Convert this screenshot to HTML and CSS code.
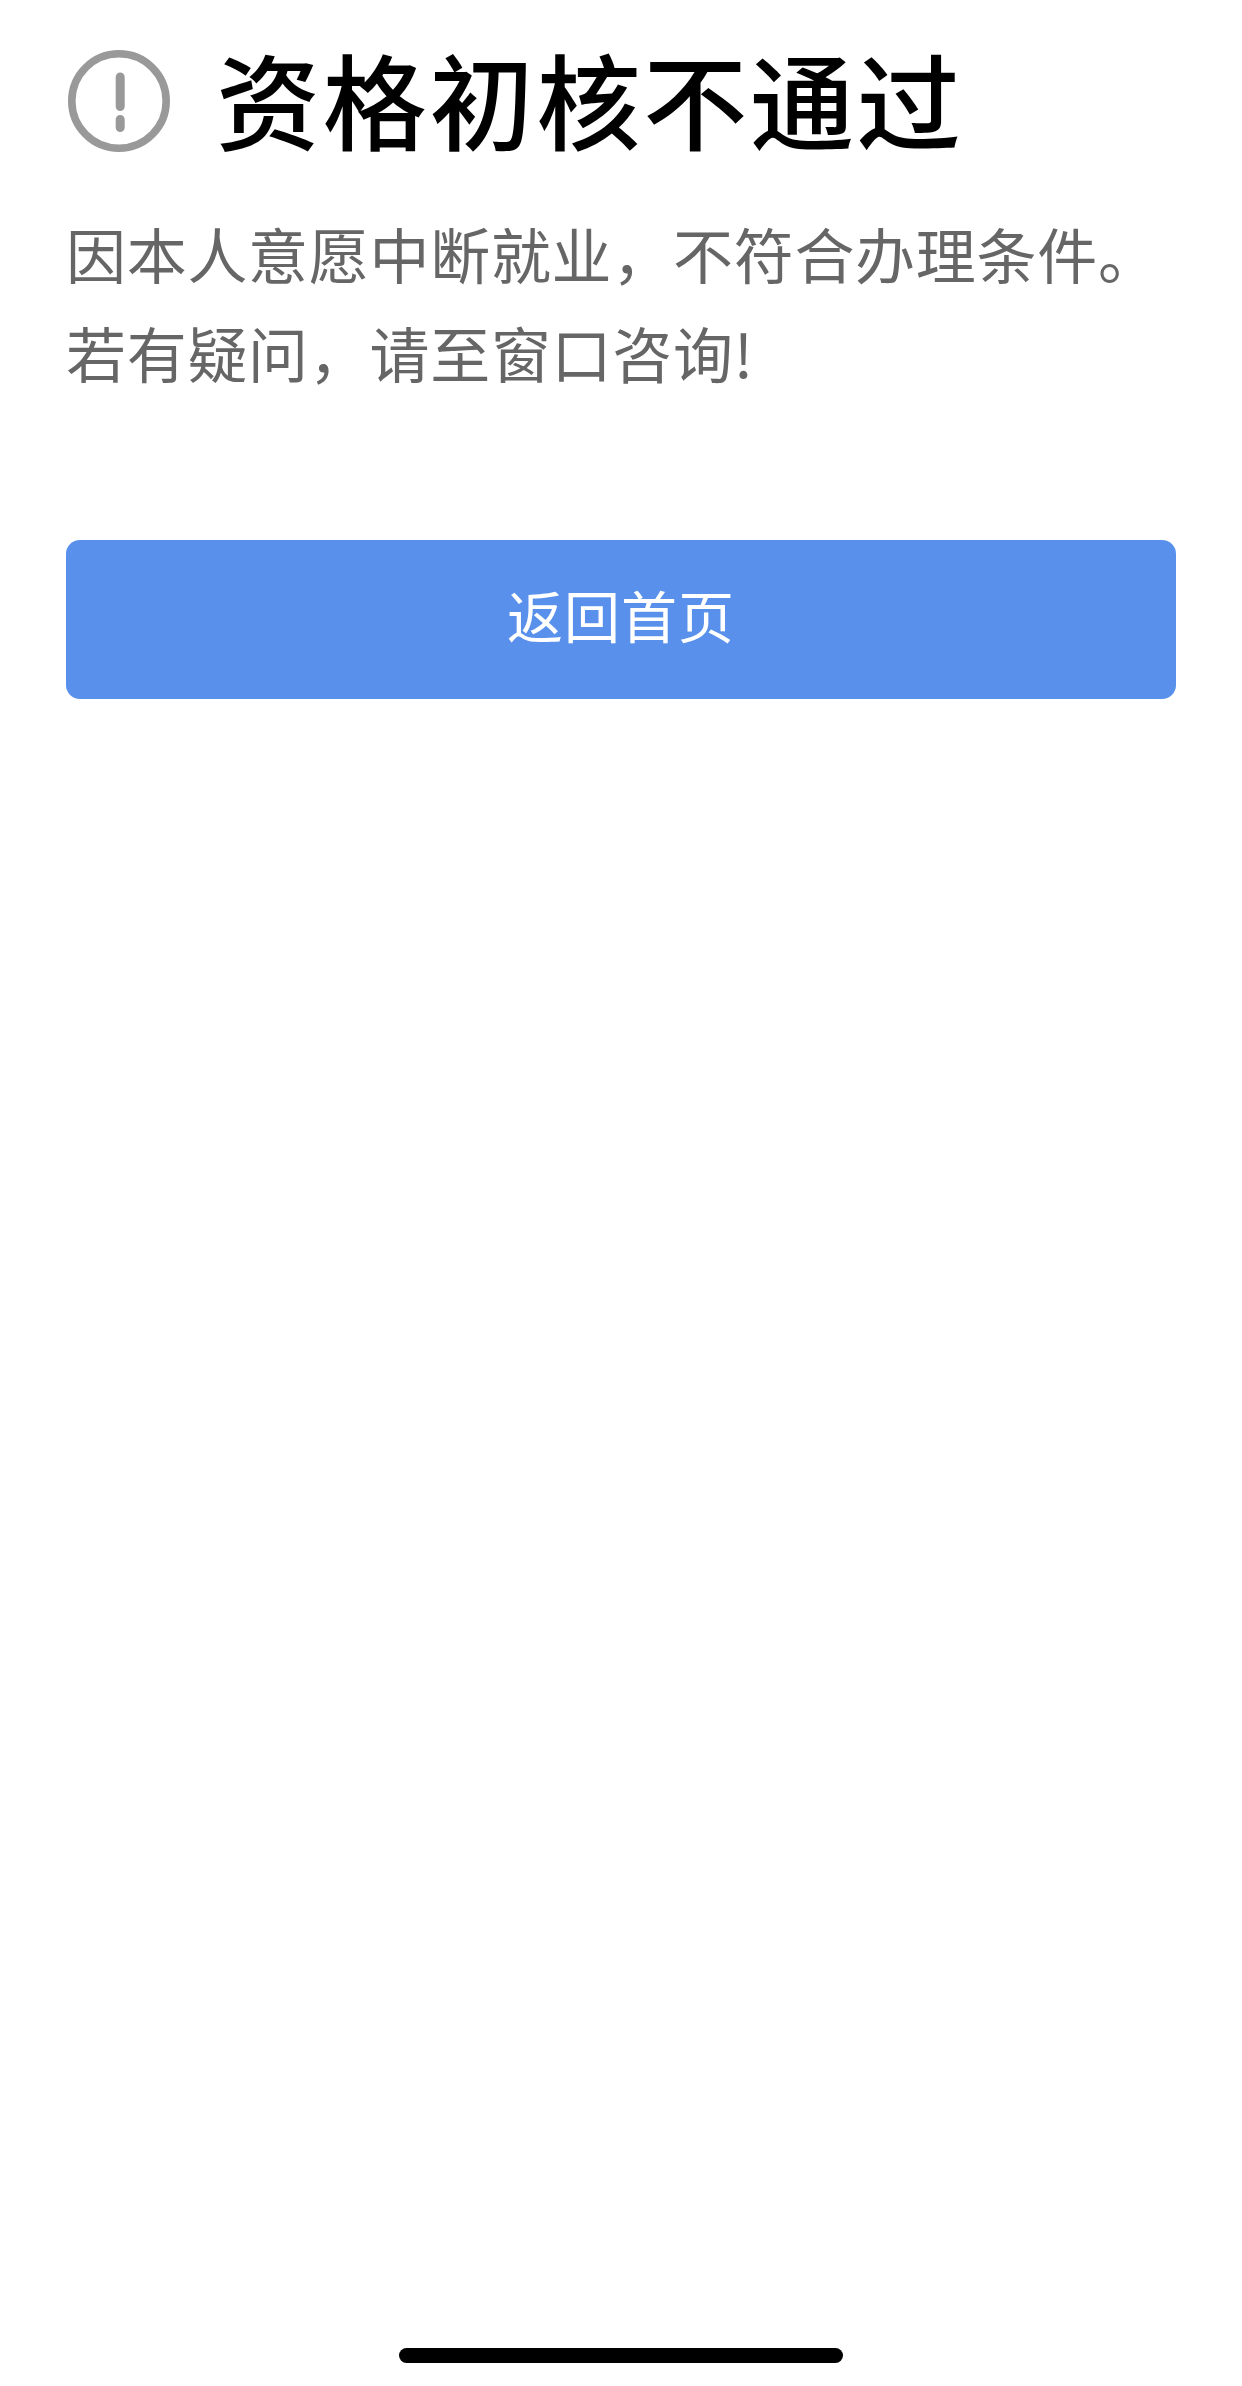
FILE: index.html
```html
<!DOCTYPE html>
<html lang="zh-CN">
	<head>
		<meta charset="utf-8">
		<title>资格初核</title>
		<link rel="stylesheet" href="styles.css">
	</head>
	<body>
		<main class="result">
			<div class="title">
				<svg class="icon" viewBox="0 0 104 104">
					<circle cx="53" cy="52" r="47.2" fill="none" stroke="#999" stroke-width="7.6"/>
					<path d="M54.2 28v29.5M54.2 70.5v8" stroke="#999" stroke-width="9" stroke-linecap="round"/>
				</svg>
				<h1>资格初核不通过</h1>
			</div>
			<p class="reason">因本人意愿中断就业，不符合办理条件。<br>若有疑问，请至窗口咨询!</p>
			<button class="back">返回首页</button>
		</main>
		<div class="home-bar"></div>
	</body>
</html>
```

FILE: styles.css
```css
* { box-sizing: border-box; }
body {
	margin: 0;
	height: 2386px;
	display: flex;
	flex-direction: column;
	justify-content: space-between;
	align-items: center;
	background: #fff;
	font-family: "Noto Sans CJK SC", sans-serif;
}
.result {
	width: 100%;
	padding: 27px 66px 0;
}
.title {
	display: flex;
	align-items: center;
	height: 148px;
}
.icon {
	width: 104px;
	height: 104px;
}
h1 {
	margin: 0 0 7px 46px;
	font-size: 104px;
	font-weight: 500;
	letter-spacing: 2.8px;
	line-height: 138px;
	color: #000;
}
.reason {
	margin: 28px 0 0;
	font-size: 60px;
	letter-spacing: 0.7px;
	line-height: 99px;
	white-space: nowrap;
	color: #666;
}
.back {
	display: block;
	width: 1110px;
	height: 159px;
	margin-top: 139px;
	padding: 0 0 12px;
	border: 0;
	border-radius: 14px;
	background: #5890eb;
	color: #fff;
	font-family: inherit;
	font-size: 56px;
	letter-spacing: 1px;
}
.home-bar {
	width: 444px;
	height: 15px;
	margin-bottom: 23px;
	border-radius: 8px;
	background: #000;
}
```
